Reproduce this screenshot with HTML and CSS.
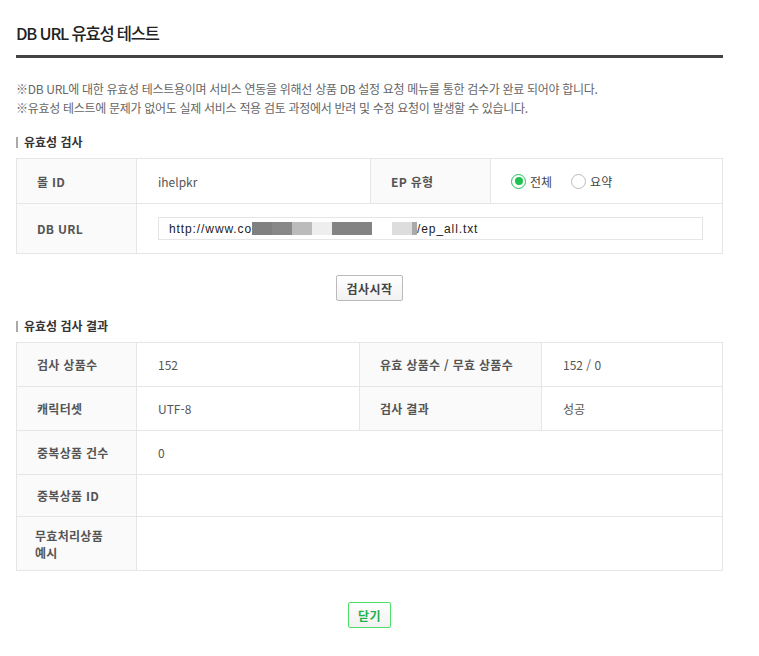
FILE: index.html
```html
<!DOCTYPE html>
<html lang="ko">
<head>
<meta charset="utf-8">
<title>DB URL 유효성 테스트</title>
<link rel="stylesheet" href="styles.css">
</head>
<body>
<div class="page">
  <h1 class="title">DB URL 유효성 테스트</h1>
  <div class="notes">
    <p>※DB URL에 대한 유효성 테스트용이며 서비스 연동을 위해선 상품 DB 설정 요청 메뉴를 통한 검수가 완료 되어야 합니다.</p>
    <p>※유효성 테스트에 문제가 없어도 실제 서비스 적용 검토 과정에서 반려 및 수정 요청이 발생할 수 있습니다.</p>
  </div>

  <h2 class="sec">유효성 검사</h2>
  <table class="grid g1">
    <colgroup><col class="c1"><col class="c2"><col class="c3"><col></colgroup>
    <tr class="r45">
      <th>몰 ID</th>
      <td>ihelpkr</td>
      <th>EP 유형</th>
      <td>
        <div class="radios">
          <label class="radio on"><span class="dot"></span>전체</label>
          <label class="radio"><span class="dot"></span>요약</label>
        </div>
      </td>
    </tr>
    <tr class="r50">
      <th>DB URL</th>
      <td colspan="3">
        <div class="url">http://www.co<span class="m m1"></span><span class="m m2"></span><span class="m m3"></span><span class="m m4"></span><span class="m m5"></span><span class="m m6"></span><span class="m m7"></span><span class="m m8"></span>/ep_all.txt</div>
      </td>
    </tr>
  </table>

  <div class="actions a1"><button class="btn">검사시작</button></div>

  <h2 class="sec">유효성 검사 결과</h2>
  <table class="grid g2">
    <colgroup><col class="c1"><col class="d2"><col class="d3"><col></colgroup>
    <tr class="r44">
      <th>검사 상품수</th>
      <td>152</td>
      <th>유효 상품수 / 무효 상품수</th>
      <td>152 / 0</td>
    </tr>
    <tr class="r44">
      <th>캐릭터셋</th>
      <td>UTF-8</td>
      <th>검사 결과</th>
      <td>성공</td>
    </tr>
    <tr class="r44">
      <th>중복상품 건수</th>
      <td colspan="3">0</td>
    </tr>
    <tr class="r42">
      <th>중복상품 ID</th>
      <td colspan="3"></td>
    </tr>
    <tr class="r54">
      <th class="wrap">무효처리상품<br>예시</th>
      <td colspan="3"></td>
    </tr>
  </table>

  <div class="actions a2"><button class="btn green">닫기</button></div>
</div>
</body>
</html>
```

FILE: styles.css
```css
html, body {
  margin: 0;
  padding: 0;
  background: #fff;
}
body {
  font-family: "Noto Sans CJK KR", "Noto Sans", "Liberation Sans", sans-serif;
  font-size: 12px;
  color: #555;
}
.page {
  width: 707px;
  padding: 0 16px;
}
.title {
  margin: 0;
  padding: 22px 0 11px;
  font-size: 16.5px;
  line-height: 22px;
  font-weight: 500;
  letter-spacing: -1.2px;
  color: #222;
  border-bottom: 3px solid #444;
}
.notes {
  margin-top: 21px;
}
.notes p {
  margin: 0;
  line-height: 19px;
  font-size: 12px;
  letter-spacing: -0.3px;
  color: #666;
}
.sec {
  margin: 17px 0 8px;
  font-size: 12px;
  line-height: 16px;
  font-weight: 700;
  color: #333;
  display: flex;
  align-items: center;
}
.sec::before {
  content: "";
  width: 2px;
  height: 11px;
  background: #aaa;
  margin-right: 6px;
}
.grid {
  width: 707px;
  border-collapse: collapse;
  table-layout: fixed;
}
.grid th, .grid td {
  border: 1px solid #e6e6e6;
  padding: 0 0 0 20px;
  text-align: left;
  vertical-align: middle;
  font-size: 12px;
}
.grid th {
  background: #fafafa;
  font-weight: 700;
  color: #555;
  letter-spacing: 0.3px;
}
.grid td {
  color: #555;
  padding-left: 21px;
}
.grid th.wrap {
  line-height: 17px;
  padding-left: 18px;
}
.g1 .c1, .g2 .c1 { width: 120px; }
.g1 .c2 { width: 234px; }
.g1 .c3 { width: 120px; }
.g2 .d2 { width: 223px; }
.g2 .d3 { width: 182px; }
.r45 { height: 45px; }
.r50 { height: 50px; }
.r44 { height: 44px; }
.r42 { height: 42px; }
.r54 { height: 54px; }

.radios {
  display: flex;
  align-items: center;
  gap: 19px;
  margin-left: -1px;
}
.radio {
  display: flex;
  align-items: center;
  gap: 4px;
  color: #444;
  font-size: 12px;
}
.dot {
  width: 13px;
  height: 13px;
  border: 1px solid #bbb;
  border-radius: 50%;
  box-sizing: content-box;
  position: relative;
  background: #fff;
}
.radio.on .dot {
  border-color: #22c35a;
}
.radio.on .dot::after {
  content: "";
  position: absolute;
  left: 2.5px;
  top: 2.5px;
  width: 8px;
  height: 8px;
  border-radius: 50%;
  background: #1fc14f;
}

.url {
  width: 533px;
  height: 21px;
  border: 1px solid #e5e5e5;
  display: flex;
  align-items: center;
  padding-left: 10px;
  box-sizing: content-box;
  color: #222;
  font-family: "Liberation Sans", "Noto Sans CJK KR", sans-serif;
  font-size: 12px;
  letter-spacing: 0.9px;
}
.m {
  display: inline-block;
  height: 13px;
}
.m1 { width: 20px; background: #808080; }
.m2 { width: 20px; background: #888; }
.m3 { width: 20px; background: #bbb; }
.m4 { width: 20px; background: #eee; }
.m5 { width: 40px; background: #838383; }
.m6 { width: 20px; background: #fff; }
.m7 { width: 20px; background: #ddd; }
.m8 { width: 5px; background: #aaa; }

.actions {
  display: flex;
  justify-content: center;
}
.a1 { margin-top: 21px; }
.a2 { margin-top: 31px; }
.btn {
  height: 26px;
  padding: 0 9px;
  border: 1px solid #bbb;
  border-radius: 2px;
  background: linear-gradient(#fff, #f1f1f1);
  font-family: "Noto Sans CJK KR", "Noto Sans", sans-serif;
  font-size: 12px;
  font-weight: 700;
  color: #444;
  letter-spacing: 0.5px;
}
.btn.green {
  border-color: #4ee064;
  color: #1fb24a;
  padding: 0 9px;
}
```
